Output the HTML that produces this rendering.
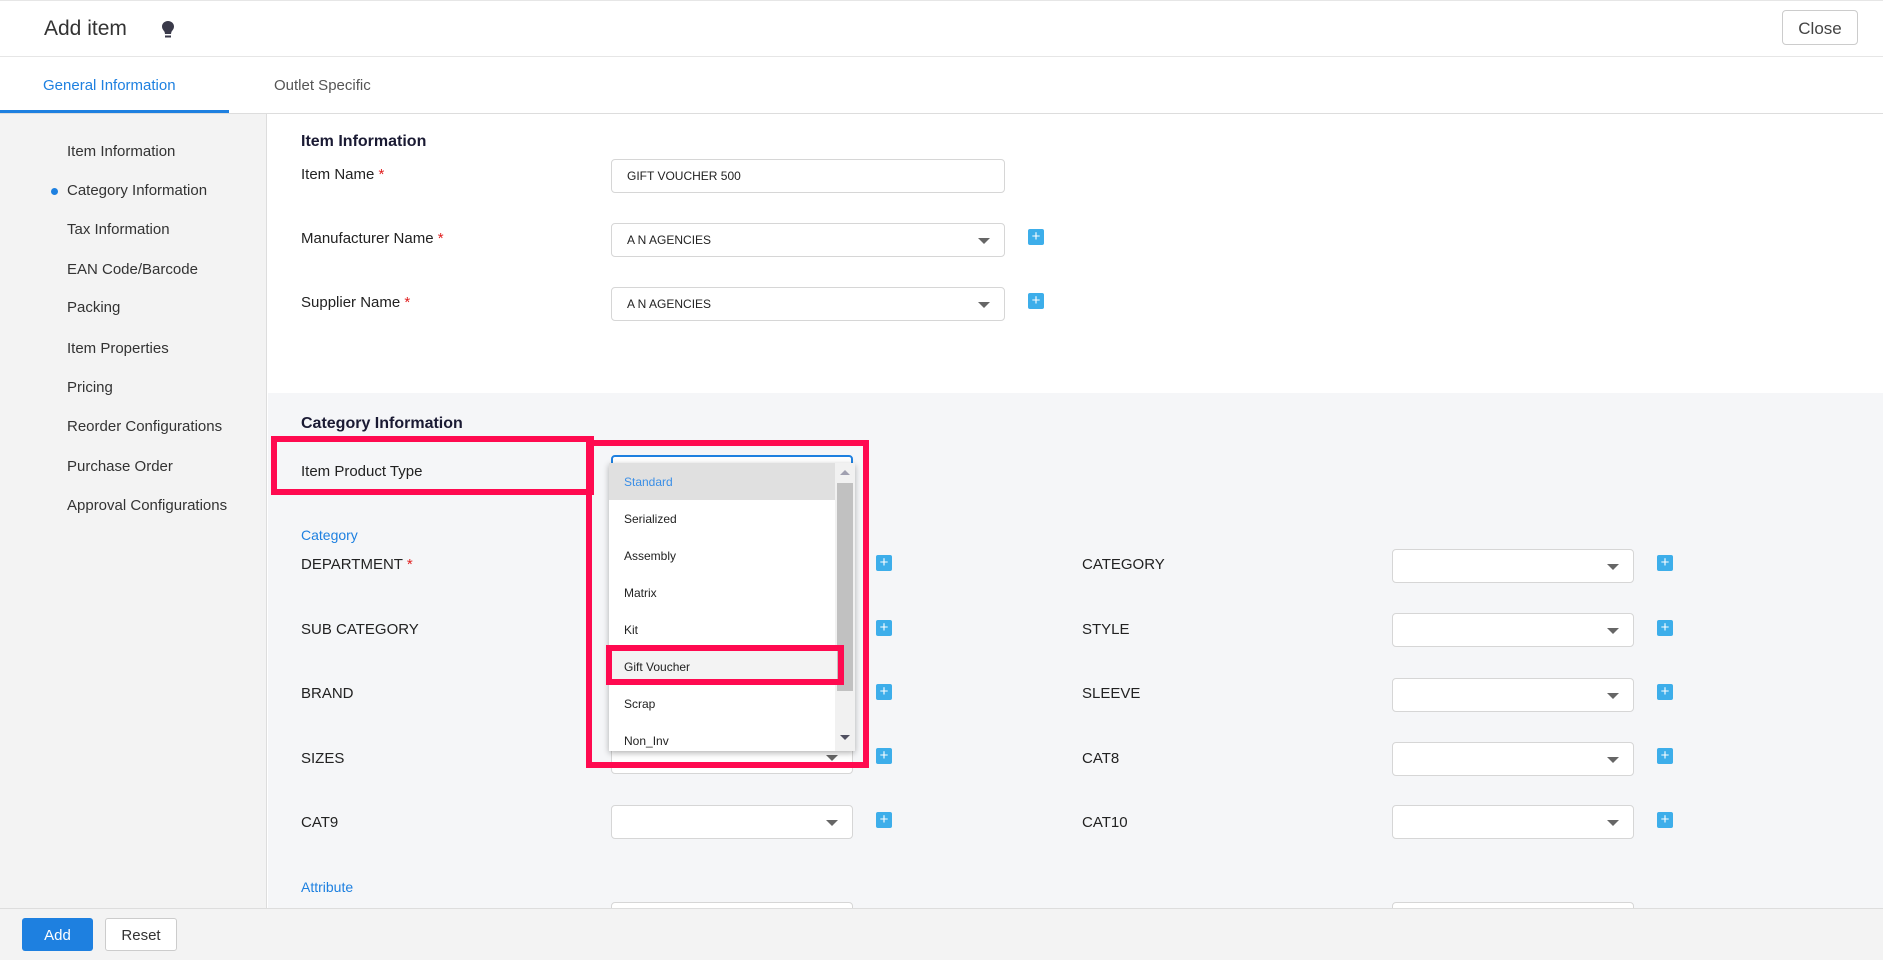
<!DOCTYPE html>
<html><head><style>
*{box-sizing:border-box;margin:0;padding:0}
body{width:1883px;height:960px;overflow:hidden;font-family:"Liberation Sans",sans-serif;background:#fff;position:relative;color:#222}
.a{position:absolute}
.hdr{left:0;top:0;width:1883px;height:57px;border-top:1px solid #e6e6e6;border-bottom:1px solid #e6e6e6;background:#fff}
.side{left:0;top:114px;width:267px;height:795px;background:#f3f3f3;border-right:1px solid #ddd}
.side div{position:absolute;left:67px;font-size:15px;color:#333}
.lbl{font-size:15px;color:#222}
.inp{background:#fff;border:1px solid #d6d6d6;border-radius:4px;height:34px}
.sel::after{content:"";position:absolute;right:14px;top:14px;border-left:6px solid transparent;border-right:6px solid transparent;border-top:6px solid #666}
.plus{width:16px;height:16px;background:#3daeea;border-radius:2px;color:#fff;font-size:15px;line-height:16px;text-align:center}
.req{color:#e02020}
.red{border:6px solid #ff0a50}
.dd div{height:37px;line-height:39px;padding-left:15px;font-size:12px;color:#222}
</style></head><body>
<div class="a hdr"></div>
<div class="a" style="left:44px;top:17px;font-size:21px;color:#333">Add item</div>
<svg class="a" style="left:161px;top:20px" width="14" height="20" viewBox="0 0 14 20"><path d="M7 1C3.5 1 1 3.5 1 6.5c0 2.5 1.8 4 2.6 5.5l.4 2h6l.4-2C11.2 10.5 13 9 13 6.5 13 3.5 10.5 1 7 1z" fill="#3a3a4a"/><rect x="4" y="15.5" width="6" height="2" fill="#3a3a4a"/></svg>
<div class="a" style="left:1782px;top:10px;width:76px;height:35px;border:1px solid #ccc;border-radius:4px;font-size:17px;color:#444;text-align:center;line-height:35px">Close</div>
<div class="a" style="left:0;top:113px;width:1883px;height:1px;background:#ddd"></div>
<div class="a" style="left:43px;top:77px;font-size:15px;color:#1e80e0">General Information</div>
<div class="a" style="left:274px;top:77px;font-size:15px;color:#555">Outlet Specific</div>
<div class="a" style="left:0;top:110px;width:229px;height:3px;background:#1e80e0"></div>
<div class="a side">
<div style="top:29px">Item Information</div>
<div style="top:68px">Category Information</div>
<div style="top:107px">Tax Information</div>
<div style="top:147px">EAN Code/Barcode</div>
<div style="top:185px">Packing</div>
<div style="top:226px">Item Properties</div>
<div style="top:265px">Pricing</div>
<div style="top:304px">Reorder Configurations</div>
<div style="top:344px">Purchase Order</div>
<div style="top:383px">Approval Configurations</div>
<div style="left:51px;top:74px;width:7px;height:7px;border-radius:50%;background:#1e80e0"></div>
</div>
<div class="a" style="left:268px;top:393px;width:1615px;height:516px;background:#f5f6f8"></div>
<div class="a" style="left:301px;top:133px;font-size:16px;font-weight:bold;color:#1a1a33">Item Information</div>
<div class="a lbl" style="left:301px;top:166px">Item Name <span class="req">*</span></div>
<div class="a inp" style="left:611px;top:159px;width:394px;font-size:12px;line-height:32px;padding-left:15px">GIFT VOUCHER 500</div>
<div class="a lbl" style="left:301px;top:230px">Manufacturer Name <span class="req">*</span></div>
<div class="a inp sel" style="left:611px;top:223px;width:394px;font-size:12px;line-height:32px;padding-left:15px">A N AGENCIES</div>
<div class="a plus" style="left:1028px;top:229px">+</div>
<div class="a lbl" style="left:301px;top:294px">Supplier Name <span class="req">*</span></div>
<div class="a inp sel" style="left:611px;top:287px;width:394px;font-size:12px;line-height:32px;padding-left:15px">A N AGENCIES</div>
<div class="a plus" style="left:1028px;top:293px">+</div>
<div class="a" style="left:301px;top:415px;font-size:16px;font-weight:bold;color:#1a1a33">Category Information</div>
<div class="a lbl" style="left:301px;top:463px">Item Product Type</div>
<div class="a inp" style="left:611px;top:455px;width:242px;border:2px solid #1e80e0"></div>
<div class="a" style="left:301px;top:527px;font-size:14px;color:#1e80e0">Category</div>

<div class="a lbl" style="left:301px;top:556px">DEPARTMENT <span class="req">*</span></div>
<div class="a lbl" style="left:301px;top:621px">SUB CATEGORY</div>
<div class="a lbl" style="left:301px;top:685px">BRAND</div>
<div class="a lbl" style="left:301px;top:750px">SIZES</div>
<div class="a lbl" style="left:301px;top:814px">CAT9</div>
<div class="a inp sel" style="left:611px;top:740px;width:242px"></div>
<div class="a inp sel" style="left:611px;top:805px;width:242px"></div>
<div class="a plus" style="left:876px;top:555px">+</div>
<div class="a plus" style="left:876px;top:620px">+</div>
<div class="a plus" style="left:876px;top:684px">+</div>
<div class="a plus" style="left:876px;top:748px">+</div>
<div class="a plus" style="left:876px;top:812px">+</div>

<div class="a lbl" style="left:1082px;top:556px">CATEGORY</div>
<div class="a lbl" style="left:1082px;top:621px">STYLE</div>
<div class="a lbl" style="left:1082px;top:685px">SLEEVE</div>
<div class="a lbl" style="left:1082px;top:750px">CAT8</div>
<div class="a lbl" style="left:1082px;top:814px">CAT10</div>
<div class="a inp sel" style="left:1392px;top:549px;width:242px"></div>
<div class="a inp sel" style="left:1392px;top:613px;width:242px"></div>
<div class="a inp sel" style="left:1392px;top:678px;width:242px"></div>
<div class="a inp sel" style="left:1392px;top:742px;width:242px"></div>
<div class="a inp sel" style="left:1392px;top:805px;width:242px"></div>
<div class="a plus" style="left:1657px;top:555px">+</div>
<div class="a plus" style="left:1657px;top:620px">+</div>
<div class="a plus" style="left:1657px;top:684px">+</div>
<div class="a plus" style="left:1657px;top:748px">+</div>
<div class="a plus" style="left:1657px;top:812px">+</div>

<div class="a" style="left:301px;top:879px;font-size:14px;color:#1e80e0">Attribute</div>
<div class="a inp" style="left:611px;top:902px;width:242px"></div>
<div class="a inp" style="left:1392px;top:902px;width:242px"></div>

<div class="a dd" style="left:609px;top:463px;width:246px;height:288px;background:#fff;box-shadow:0 2px 6px rgba(0,0,0,.3);overflow:hidden">
<div style="background:#e0e0e0;color:#3a8ee6;width:226px">Standard</div>
<div>Serialized</div><div>Assembly</div><div>Matrix</div><div>Kit</div>
<div style="background:#f3f3f3;width:226px">Gift Voucher</div><div>Scrap</div><div>Non_Inv</div>
<div class="a" style="left:226px;top:0;width:20px;height:288px;background:#f1f1f1;padding:0"></div>
<div class="a" style="left:228px;top:20px;width:16px;height:208px;background:#c1c1c1;padding:0"></div>
<div class="a" style="left:231px;top:7px;width:0;height:0;padding:0;border-left:5px solid transparent;border-right:5px solid transparent;border-bottom:5px solid #a0a0b0"></div>
<div class="a" style="left:231px;top:272px;width:0;height:0;padding:0;border-left:5px solid transparent;border-right:5px solid transparent;border-top:5px solid #505060"></div>
</div>

<div class="a red" style="left:271px;top:436px;width:323px;height:59px"></div>
<div class="a red" style="left:586px;top:440px;width:283px;height:328px"></div>
<div class="a red" style="left:606px;top:645px;width:238px;height:40px"></div>

<div class="a" style="left:0;top:908px;width:1883px;height:52px;background:#f3f3f3;border-top:1px solid #ddd"></div>
<div class="a" style="left:22px;top:918px;width:71px;height:33px;background:#1e80e0;border-radius:3px;color:#fff;font-size:15px;text-align:center;line-height:35px">Add</div>
<div class="a" style="left:105px;top:918px;width:72px;height:33px;background:#fff;border:1px solid #ccc;border-radius:3px;color:#333;font-size:15px;text-align:center;line-height:33px">Reset</div>
</body></html>
